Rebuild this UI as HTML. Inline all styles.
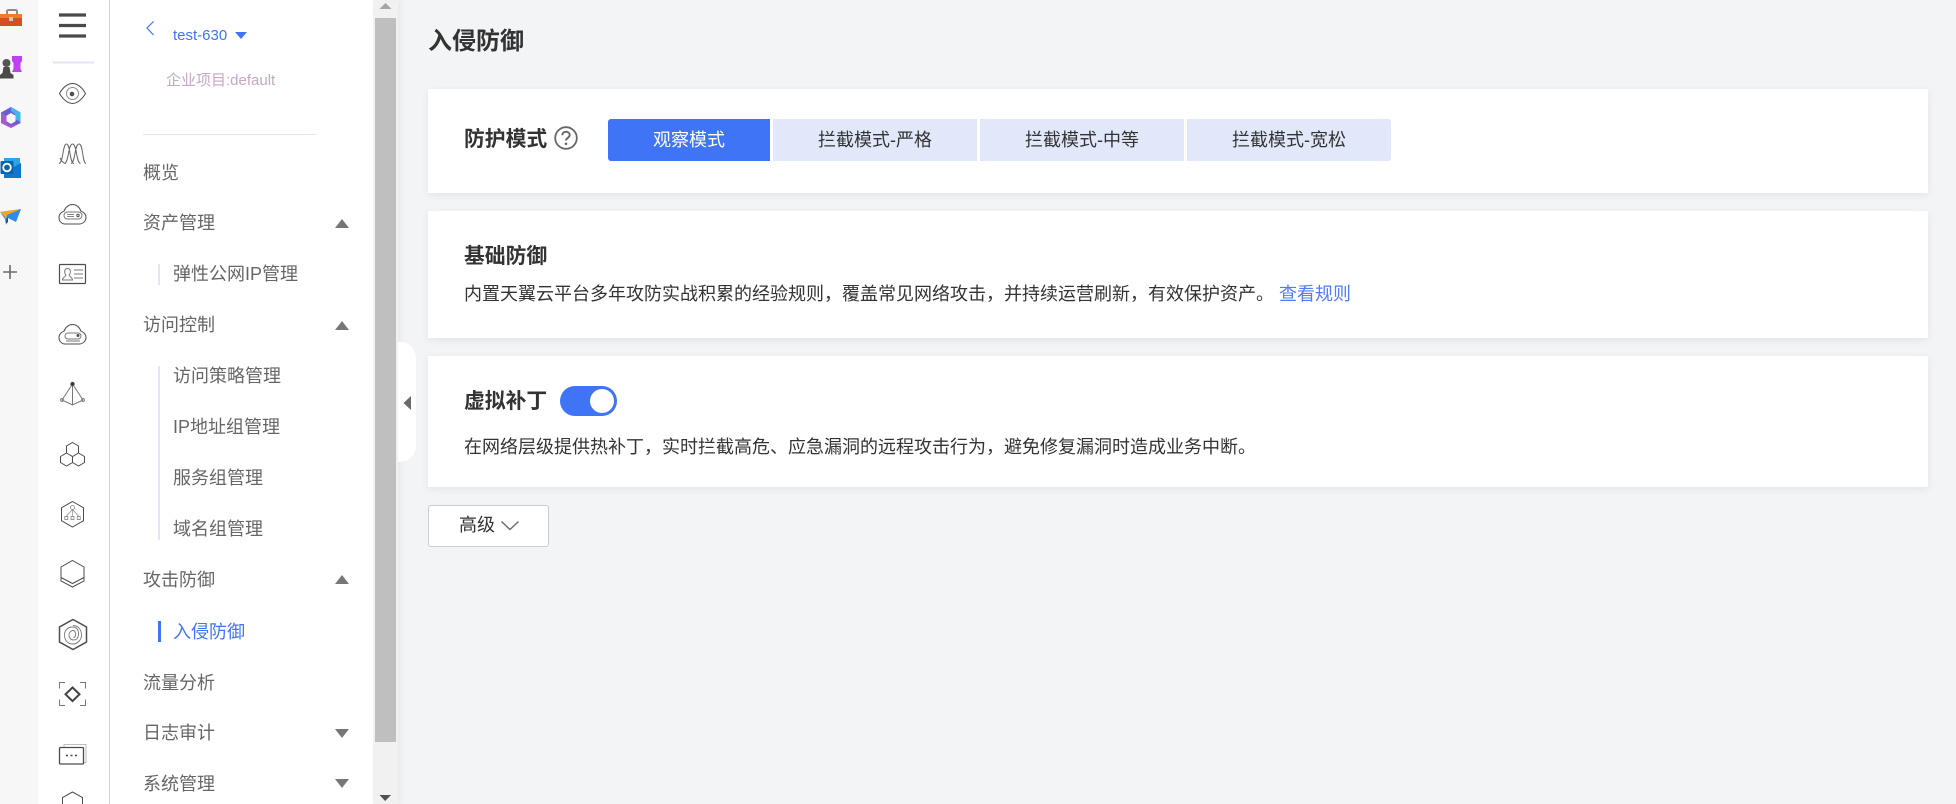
<!DOCTYPE html>
<html lang="zh-CN"><head><meta charset="utf-8"><title>入侵防御</title>
<style>
html,body{margin:0;padding:0;width:1956px;height:804px;overflow:hidden;background:#f3f4f6;font-family:"Liberation Sans","Noto Sans CJK SC",sans-serif;color:#333}
div,span,a{position:absolute;white-space:nowrap}
.t{line-height:26px;height:26px;font-size:18px}
.m{color:#666;left:143px}
.s{color:#666;left:173px}
.card{left:428px;width:1500px;background:#fff;box-shadow:0 2px 8px rgba(0,0,0,.07)}
.h{left:464px;font-size:20.8px;font-weight:700;color:#333;line-height:30px;height:30px}
.seg{top:119px;height:42px;line-height:42px;font-size:18px;text-align:center;background:#e1e8fa;color:#333}
</style></head><body>
<div style="left:0;top:0;width:38px;height:804px;background:#f7f7f7"></div>
<div style="left:38px;top:0;width:335px;height:804px;background:#fff"></div>
<div style="left:108.5px;top:0;width:1.5px;height:804px;background:#cfcfcf"></div>
<div style="left:373px;top:0;width:25px;height:804px;background:#f1f1f1;box-shadow:3px 0 6px rgba(0,0,0,.05)"></div>
<div style="left:375px;top:18px;width:21px;height:724px;background:#bfbfbf"></div>
<div style="left:398px;top:342px;width:18px;height:120px;background:#fff;border-radius:0 16px 16px 0"></div>

<svg style="position:absolute;left:0;top:0" width="1956" height="804" viewBox="0 0 1956 804" fill="none">
<!-- left strip -->
<rect x="7" y="10" width="10" height="6" rx="1.500" stroke="#8c8c8c" stroke-width="2"/>
<path d="M0 14H22V26H0Z" fill="#d4501c"/><rect x="0" y="14" width="22" height="4" fill="#ef7b32"/><rect x="9" y="17" width="4" height="4" fill="#c9c9c9"/>
<path d="M12 56h10v5l-1.500 2v6l1.500 3H12l1.500-3v-6L12 61Z" fill="#c040f5"/>
<circle cx="6.500" cy="63" r="4" fill="#555"/><path d="M3.500 67h6l1 6 3 2v3.500H0V75l2.500-2Z" fill="#4a4a4a"/>
<path d="M11 107l9.500 5.500v10.500L11 128l-10-5v-10.500Z" fill="#6a5fd0"/><path d="M11 107l9.500 5.500v9.500l-5.500-3v-5l-4-3Z" fill="#3fb8e8"/><path d="M1 113l5.500 3v7l4.500 2.500 9.500-2.500L11 128l-10-5Z" fill="#a85ad0"/><path d="M11 113l4.500 2.700v5.600L11 124l-4.500-2.700v-5.600Z" fill="#f7f7f7"/>
<path d="M4 158h16v20H4Z" fill="#2aa6e8"/><path d="M12 168l9-5v15H4v-8Z" fill="#0f78c8"/><rect x="0.500" y="161" width="13" height="13" rx="1" fill="#0a63b0"/><circle cx="7" cy="167.500" r="3.800" stroke="#fff" stroke-width="1.800"/>
<path d="M0 212l21-3-5 13-8-4-2 7-1-6Z" fill="#2e8be8"/><path d="M0 212l21-3-14 6-1 4-2-3Z" fill="#f2a81e"/><path d="M6 220l2-3v5l-2 2Z" fill="#15559c"/>
<path d="M10 265v14M3 272h14" stroke="#6a6a6a" stroke-width="1.600"/>
<!-- rail -->
<g stroke="#4a4a4a" stroke-width="3.200"><path d="M59 15h27M59 25.500h27M59 36h27"/></g>
<path d="M53 62.500h41" stroke="#e1e6f5" stroke-width="2"/>
<g stroke="#4d4d4d" stroke-width="1">
<path d="M59.500 93.500C63 87 68 83.500 72.500 83.500S82 87 85.500 93.500C82 99.500 77 103.500 72.500 103.500S63 99.500 59.500 93.500Z"/><circle cx="72.500" cy="93.500" r="6" stroke="#888"/><circle cx="72" cy="94" r="1.800" fill="#4d4d4d"/>
<path d="M59 163.500c4.500-1 3.500-19.500 7.500-19.500s3 19.500 7.500 19.500M64.500 163.500c4.500-1 3.500-19.500 8-19.500s3.500 18.500 8 19.500M71 163.500c4.500-1 3.500-19.500 8-19.500s3 18.500 7 19.500M60 158c2 4 4 5.500 6 5.500" stroke="#666"/>
<path d="M65 224h14c4 0 7-3 7-6.500 0-3-2-5.500-5-6.300C79.500 207 76 204.500 72.500 204.500S65.500 207 64 211.200c-3 .8-5 3.300-5 6.300 0 3.500 2.500 6.500 6 6.500Z"/><rect x="64" y="212" width="18" height="7" rx="3.500" stroke="#777"/><path d="M67 214.500h7M67 216.500h7" stroke="#888"/><circle cx="78" cy="215.500" r="1.200"/>
<rect x="59.500" y="264.500" width="26" height="19" rx=".8" stroke-width="1.200"/><path d="M62.500 280c0-3 3-3 3.500-5-2-2-2-6.500 1.500-6.500S71 273 69 275c.5 2 3.500 2 3.500 5ZM74 270h9M74 274h9M74 278h9" stroke="#777"/>
<path d="M65 344h14c4 0 7-3 7-6.500 0-3-2-5.500-5-6.300C79.500 327 76 324.500 72.500 324.500S65.500 327 64 331.200c-3 .8-5 3.300-5 6.300 0 3.500 2.500 6.500 6 6.500Z"/><rect x="65" y="333" width="16" height="6" rx="3" stroke="#777"/><path d="M66 341h14" stroke="#777"/><circle cx="78" cy="335.500" r="1" fill="#4d4d4d"/>
<path d="M72.500 384V405M72.500 384L62 400l10.500 5L83 400Z" stroke="#777"/><circle cx="62" cy="400" r="1.500" stroke="#888"/><circle cx="83" cy="400" r="1.500" stroke="#888"/><circle cx="72.500" cy="384" r="1.700" fill="#333"/>
<path d="M72.500 442.500l6 3.500v7l-6 3.500-6-3.500v-7ZM66.500 453l6 3.500v6L66.500 466l-6-3.500v-6ZM78.500 453l6 3.500v6L78.500 466l-6-3.500"/>
<path d="M72.500 501.500l11 6.300v12.900l-11 6.300-11-6.300v-12.900Z"/><circle cx="72.500" cy="507.500" r="2" stroke-width=".8" stroke="#888"/><path d="M72.500 509.500l-6 6.500M72.500 509.500v6.500M72.500 509.500l6 6.500" stroke-width=".7" stroke="#888"/><path d="M64.800 516.500h3v3h-3ZM71 516.500h3v3h-3ZM77.200 516.500h3v3h-3Z" stroke-width=".7" stroke="#777"/>
<path d="M72.500 560.500l11.500 6.500v14l-11.500 6-11.500-6v-14ZM61 577.500l11.500 6 11.500-6"/>
<path d="M73 619.500l13.500 7.500v15l-13.500 7.500-13.500-7.500v-15Z" stroke-width="1.500"/><path d="M73 625.500c5.500 0 8.500 4.500 8.500 9.500s-4 9-9 9-8-4-8-9 3.500-8 8-8 6 3 6 7-2 6-5 6-4.500-2.500-4.500-5 1.800-4.500 4-4.500 2.500 2 2.500 4-1 3-2 3" stroke-width=".9" stroke="#777"/>
<path d="M65 682.500h-5.500v6M80 682.500h5.500v6M65 705.500h-5.500v-6M80 705.500h5.500v-6" stroke="#777"/><path d="M72.500 687.500l7 6.800-7 6.800-7-6.800Z" stroke-width="2" stroke="#444"/>
<path d="M64 747v-2.500h22v18h-3" stroke="#bdbdbd"/><rect x="59.500" y="747.500" width="24" height="16.500" rx="1" stroke-width="1.300"/><path d="M66 755.500h2M70.500 755.500h2M75 755.500h2" stroke-width="1.600" stroke="#444"/>
<path d="M72.500 792l10 5.500v8h-20v-8Z"/>
</g>
<!-- menu bits -->
<path d="M153.500 21.500L147 28l6.500 7" stroke="#3f74f6" stroke-width="1.200"/>
<path d="M235 32h12l-6 7Z" fill="#3f74f6"/>
<path d="M143 134.500h173" stroke="#e4e4ec" stroke-width="1"/>
<g fill="#777"><path d="M342 219l7 9h-14Z"/><path d="M342 321l7 9h-14Z"/><path d="M342 575l7 9h-14Z"/><path d="M335 729h14l-7 9Z"/><path d="M335 779h14l-7 9Z"/></g>
<path d="M158 264h2v21h-2ZM158 366h2v174h-2Z" fill="#e1e6f5"/>
<path d="M158 621h3v21h-3Z" fill="#3f74f6"/>
<path d="M385.500 3l6 6h-12Z" fill="#a5a5a5"/><path d="M379.500 795h11.500l-5.800 6Z" fill="#505050"/>
<path d="M411 396v14l-7.500-7Z" fill="#6a6a6a"/>
</svg>

<div class="t" style="left:173px;top:23px;font-size:15px;color:#3f74f6">test-630</div>
<div class="t" style="left:166px;top:68px;font-size:15px;color:#c4a8c4">企业项目:default</div>
<div class="t m" style="top:160px">概览</div>
<div class="t m" style="top:210px">资产管理</div>
<div class="t s" style="top:261px">弹性公网IP管理</div>
<div class="t m" style="top:312px">访问控制</div>
<div class="t s" style="top:363px">访问策略管理</div>
<div class="t s" style="top:414px">IP地址组管理</div>
<div class="t s" style="top:465px">服务组管理</div>
<div class="t s" style="top:516px">域名组管理</div>
<div class="t m" style="top:567px">攻击防御</div>
<div class="t s" style="top:619px;color:#3f74f6">入侵防御</div>
<div class="t m" style="top:670px">流量分析</div>
<div class="t m" style="top:720px">日志审计</div>
<div class="t m" style="top:771px">系统管理</div>

<div style="left:428px;top:25px;font-size:24px;font-weight:700;line-height:34px;color:#333">入侵防御</div>

<div class="card" style="top:89px;height:104px"></div>
<div class="card" style="top:211px;height:127px"></div>
<div class="card" style="top:356px;height:131px"></div>

<div class="h" style="top:125px">防护模式</div>
<svg style="position:absolute;left:554px;top:126px" width="24" height="24" viewBox="0 0 24 24" fill="none"><circle cx="12" cy="12" r="10.800" stroke="#666" stroke-width="1.800"/><path d="M8.300 9.300c0-2.200 1.600-3.500 3.700-3.500s3.700 1.300 3.700 3.200c0 2.800-3.700 2.800-3.700 5.500" stroke="#666" stroke-width="1.900"/><circle cx="12" cy="17.800" r="1.300" fill="#666"/></svg>
<div class="seg" style="left:608px;width:162px;background:#3f74f6;color:#fff;border-radius:3px 0 0 3px">观察模式</div>
<div class="seg" style="left:773px;width:204px">拦截模式-严格</div>
<div class="seg" style="left:980px;width:204px">拦截模式-中等</div>
<div class="seg" style="left:1187px;width:204px;border-radius:0 3px 3px 0">拦截模式-宽松</div>

<div class="h" style="top:242px">基础防御</div>
<div class="t" style="left:464px;top:281px">内置天翼云平台多年攻防实战积累的经验规则，覆盖常见网络攻击，并持续运营刷新，有效保护资产。</div>
<a class="t" style="left:1279px;top:281px;color:#4f7cf8">查看规则</a>

<div class="h" style="top:387px">虚拟补丁</div>
<div style="left:560px;top:386px;width:57px;height:30px;border-radius:15px;background:#3f74f6"></div>
<div style="left:590px;top:389px;width:24px;height:24px;border-radius:50%;background:#fff"></div>
<div class="t" style="left:464px;top:434px">在网络层级提供热补丁，实时拦截高危、应急漏洞的远程攻击行为，避免修复漏洞时造成业务中断。</div>

<div style="left:428px;top:505px;width:119px;height:40px;background:#fff;border:1px solid #ccc;border-radius:3px"></div>
<div class="t" style="left:459px;top:512px">高级</div>
<svg style="position:absolute;left:500px;top:519px" width="20" height="13" viewBox="0 0 20 13" fill="none"><path d="M1.500 2.500L10 10.500 18.500 2.500" stroke="#6a6f78" stroke-width="1.500"/></svg>
</body></html>
